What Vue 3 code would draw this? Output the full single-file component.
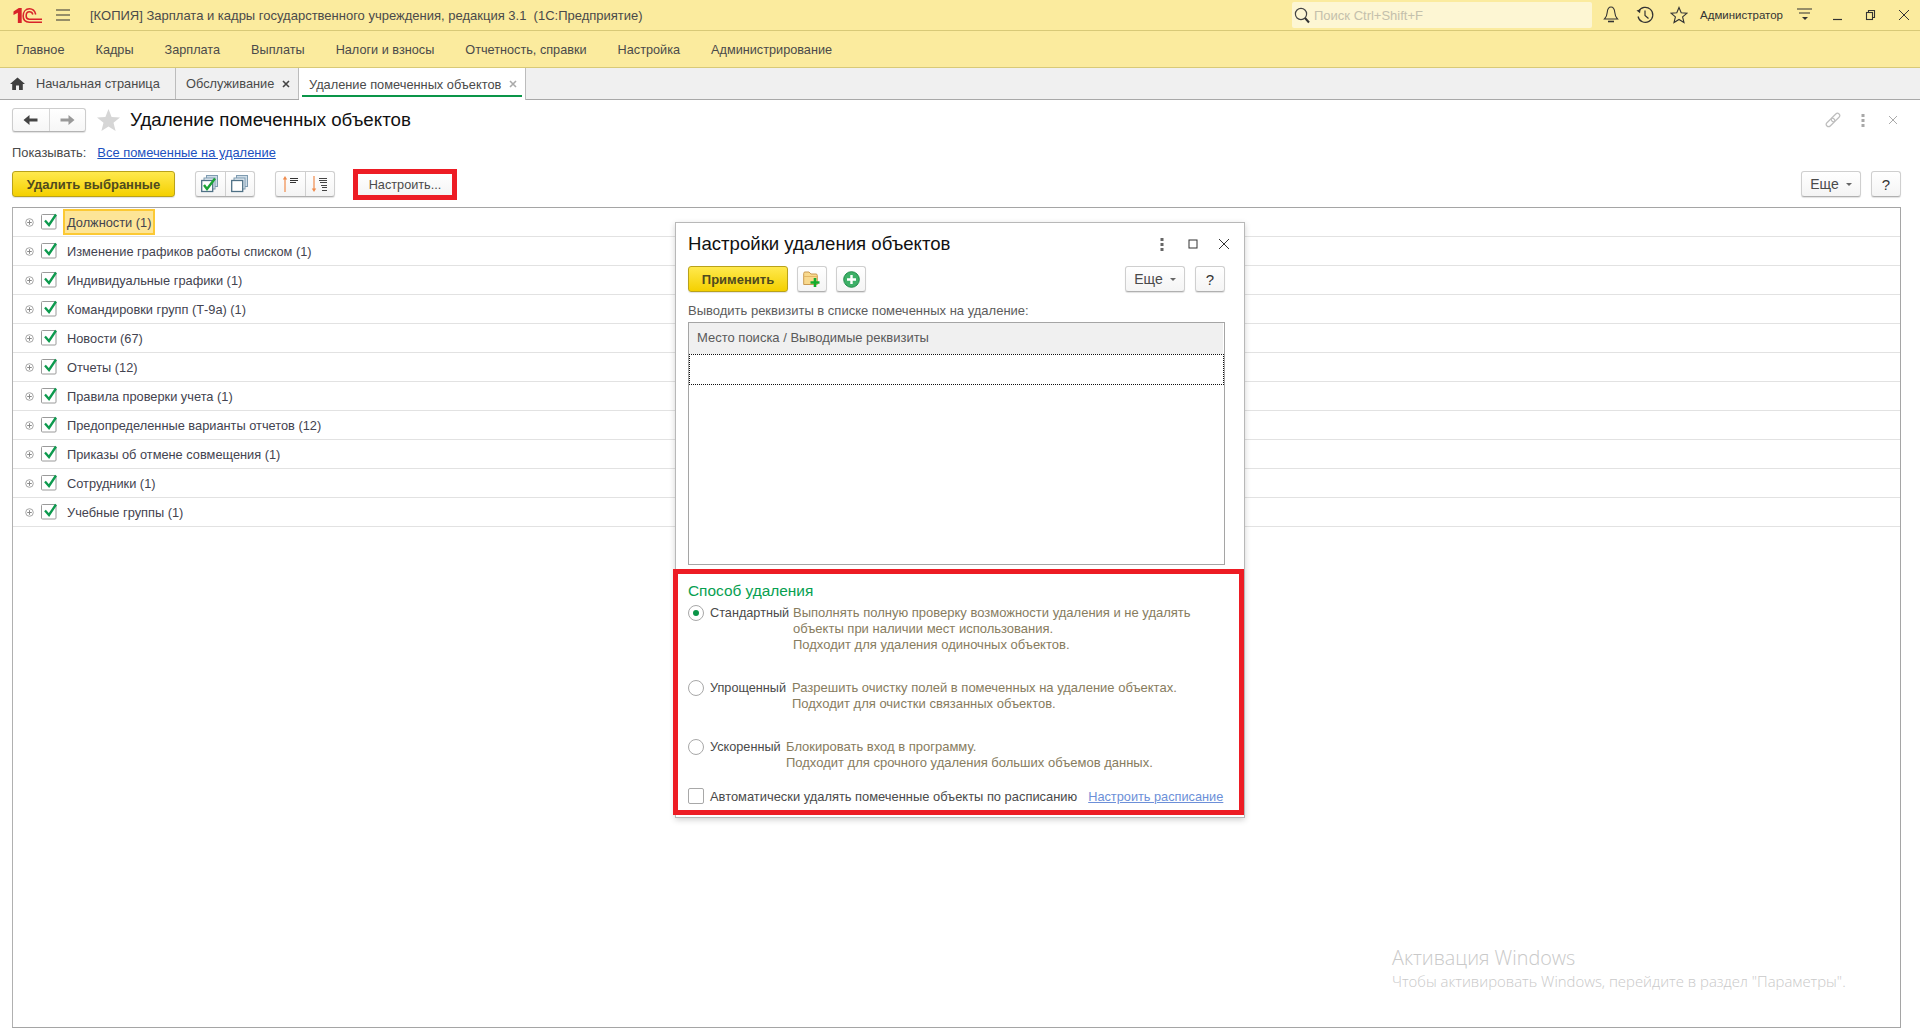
<script setup>
const menuItems = ['Главное', 'Кадры', 'Зарплата', 'Выплаты', 'Налоги и взносы', 'Отчетность, справки', 'Настройка', 'Администрирование']

const rows = [
  'Должности (1)',
  'Изменение графиков работы списком (1)',
  'Индивидуальные графики (1)',
  'Командировки групп (Т-9а) (1)',
  'Новости (67)',
  'Отчеты (12)',
  'Правила проверки учета (1)',
  'Предопределенные варианты отчетов (12)',
  'Приказы об отмене совмещения (1)',
  'Сотрудники (1)',
  'Учебные группы (1)'
]

const methods = [
  {
    name: 'Стандартный',
    nameWidth: 83,
    selected: true,
    lines: ['Выполнять полную проверку возможности удаления и не удалять', 'объекты при наличии мест использования.', 'Подходит для удаления одиночных объектов.']
  },
  {
    name: 'Упрощенный',
    nameWidth: 82,
    selected: false,
    lines: ['Разрешить очистку полей в помеченных на удаление объектах.', 'Подходит для очистки связанных объектов.']
  },
  {
    name: 'Ускоренный',
    nameWidth: 76,
    selected: false,
    lines: ['Блокировать вход в программу.', 'Подходит для срочного удаления больших объемов данных.']
  }
]
</script>

<template>
  <div class="app">
    <header class="topbar">
      <svg class="logo" width="29" height="15" viewBox="0 0 30 15" preserveAspectRatio="none">
        <path d="M0.5 3.5 L6 0 H9 V15 H5 V4.8 L0.5 7z" fill="#d8232a" />
        <path d="M23.5 6.5 C22.5 2.5 20 0.8 17 0.8 C13 0.8 10.5 4 10.5 8 C10.5 12 13 14.2 17 14.2 H30" fill="none" stroke="#d8232a" stroke-width="1.6" />
        <path d="M20.5 6.5 C20 4.5 18.5 3.8 17 3.8 C15 3.8 13.6 5.5 13.6 8 C13.6 10.3 15 11.2 17 11.2 H30" fill="none" stroke="#d8232a" stroke-width="1.6" />
      </svg>
      <svg class="burger" width="14" height="12" viewBox="0 0 14 12">
        <path d="M0 1 H14 M0 6 H14 M0 11 H14" stroke="#333" stroke-width="1.2" />
      </svg>
      <div class="app-title">[КОПИЯ] Зарплата и кадры государственного учреждения, редакция 3.1&nbsp; (1С:Предприятие)</div>
      <div class="search">
        <svg width="16" height="17" viewBox="0 0 16 17">
          <circle cx="7" cy="7" r="5.6" fill="none" stroke="#444" stroke-width="1.2" />
          <path d="M11 11 L15 15.5" stroke="#333" stroke-width="2" />
        </svg>
        <span>Поиск Ctrl+Shift+F</span>
      </div>
      <div class="top-slot">
        <svg width="16" height="18" viewBox="0 0 16 18" fill="none" stroke="#333" stroke-width="1.1">
          <path d="M8 1 C5 1 4.5 3.5 4.2 6.5 C4 9.5 3 11.5 1.5 13 H14.5 C13 11.5 12 9.5 11.8 6.5 C11.5 3.5 11 1 8 1z" />
          <path d="M5 15.5 H11" stroke-width="1.6" />
        </svg>
      </div>
      <div class="top-slot">
        <svg width="18" height="18" viewBox="0 0 18 18" fill="none" stroke="#333" stroke-width="1.2">
          <path d="M2.6 5.5 A7.5 7.5 0 1 1 2 10.5" />
          <path d="M0.5 4.5 L4.5 3.2 L4 7.2z" fill="#333" stroke="none" />
          <path d="M9 4.5 V9.5 L12.5 12.5" />
        </svg>
      </div>
      <div class="top-slot">
        <svg width="18" height="18" viewBox="0 0 18 18">
          <path d="M9 1.5 L11.2 6.8 L17 7.2 L12.6 10.9 L14 16.5 L9 13.5 L4 16.5 L5.4 10.9 L1 7.2 L6.8 6.8z" fill="none" stroke="#333" stroke-width="1.1" />
        </svg>
      </div>
      <div class="user">Администратор</div>
      <div class="win-slot">
        <svg width="16" height="14" viewBox="0 0 16 14">
          <path d="M0 1 H15 M2 5 H13" stroke="#333" stroke-width="1.1" />
          <path d="M5 9 H11 L8 12z" fill="#333" />
        </svg>
      </div>
      <div class="win-slot">
        <svg width="12" height="12" viewBox="0 0 12 12"><path d="M1 10.5 H10" stroke="#333" stroke-width="1.2" /></svg>
      </div>
      <div class="win-slot">
        <svg width="12" height="12" viewBox="0 0 12 12" fill="none" stroke="#333" stroke-width="1.1">
          <rect x="1.5" y="3.5" width="6" height="7" />
          <path d="M3.5 3.5 V1.5 H9.5 V8.5 H7.5" />
        </svg>
      </div>
      <div class="win-slot">
        <svg width="12" height="12" viewBox="0 0 12 12"><path d="M1 1 L11 11 M11 1 L1 11" stroke="#333" stroke-width="1" /></svg>
      </div>
    </header>

    <nav class="menu">
      <span v-for="item in menuItems" :key="item" class="menu-item">{{ item }}</span>
    </nav>

    <div class="tabs">
      <div class="tab tab-home">
        <svg width="15" height="13" viewBox="0 0 15 13">
          <path d="M7.5 0.5 L15 7 H12.8 V13 H9 V8.5 H6 V13 H2.2 V7 H0z" fill="#3f3f3f" />
        </svg>
        <span>Начальная страница</span>
      </div>
      <div class="tab tab-service">
        <span>Обслуживание</span>
        <svg width="8" height="8" viewBox="0 0 8 8"><path d="M1 1 L7 7 M7 1 L1 7" stroke="#444" stroke-width="1.6" /></svg>
      </div>
      <div class="tab tab-active">
        <span>Удаление помеченных объектов</span>
        <svg width="8" height="8" viewBox="0 0 8 8"><path d="M1 1 L7 7 M7 1 L1 7" stroke="#aaa" stroke-width="1.6" /></svg>
      </div>
    </div>

    <main class="page">
      <div class="page-head">
        <div class="nav-btns">
          <button class="nav-btn">
            <svg width="15" height="12" viewBox="0 0 15 12"><path d="M0.5 6 L6.5 1 V4.4 H14.5 V7.6 H6.5 V11z" fill="#444" /></svg>
          </button>
          <button class="nav-btn">
            <svg width="15" height="12" viewBox="0 0 15 12"><path d="M14.5 6 L8.5 1 V4.4 H0.5 V7.6 H8.5 V11z" fill="#999" /></svg>
          </button>
        </div>
        <svg class="fav" width="23" height="22" viewBox="0 0 23 22">
          <path d="M11.5 0 L14.6 7.9 L23 8.4 L16.5 13.7 L18.6 22 L11.5 17.4 L4.4 22 L6.5 13.7 L0 8.4 L8.4 7.9z" fill="#d6d6d6" />
        </svg>
        <h1 class="page-title">Удаление помеченных объектов</h1>
        <div class="head-icons">
          <svg width="16" height="16" viewBox="0 0 16 16" fill="none" stroke="#bdbdbd" stroke-width="1.2">
            <rect x="0.5" y="8.2" width="10" height="4.6" rx="2.3" transform="rotate(-45 5.5 10.5)" />
            <rect x="5.5" y="3.2" width="10" height="4.6" rx="2.3" transform="rotate(-45 10.5 5.5)" />
          </svg>
          <svg width="16" height="16" viewBox="0 0 16 16" fill="#a8a8a8">
            <rect x="6.5" y="2" width="3" height="3" /><rect x="6.5" y="7" width="3" height="3" /><rect x="6.5" y="12" width="3" height="3" />
          </svg>
          <svg width="16" height="16" viewBox="0 0 16 16"><path d="M4 4 L12 12 M12 4 L4 12" stroke="#aaa" stroke-width="1" /></svg>
        </div>
      </div>

      <div class="show-row">
        <span>Показывать:</span>
        <a class="link">Все помеченные на удаление</a>
      </div>

      <div class="toolbar">
        <button class="btn btn-primary btn-delete">Удалить выбранные</button>
        <div class="btn-group">
          <button class="group-cell">
            <svg width="18" height="18" viewBox="0 0 18 18" fill="none">
              <rect x="5.5" y="0.5" width="11" height="11" fill="#cfdde8" stroke="#7f9bb0" />
              <rect x="3" y="3" width="11" height="11" fill="#e4edf4" stroke="#7f9bb0" />
              <rect x="0.7" y="5.5" width="11" height="11" fill="#fff" stroke="#4f7186" stroke-width="1.3" />
              <path d="M3 10 L6 14 L14 3.5" stroke="#1aa336" stroke-width="2.4" />
            </svg>
          </button>
          <button class="group-cell">
            <svg width="18" height="18" viewBox="0 0 18 18" fill="none">
              <rect x="5.5" y="0.5" width="11" height="11" fill="#cfdde8" stroke="#7f9bb0" />
              <rect x="3" y="3" width="11" height="11" fill="#e4edf4" stroke="#7f9bb0" />
              <rect x="0.7" y="5.5" width="11" height="11" fill="#fff" stroke="#4f7186" stroke-width="1.3" />
            </svg>
          </button>
        </div>
        <div class="btn-group">
          <button class="group-cell">
            <svg width="17" height="18" viewBox="0 0 17 18" fill="none">
              <path d="M3 17 V3" stroke="#f08a4b" stroke-width="1.2" />
              <path d="M0.8 4.5 L3 1 L5.2 4.5z" fill="#f08a4b" />
              <path d="M8 3.5 H16 M8 5.5 H16 M8 7.5 H14" stroke="#333" stroke-width="1" />
            </svg>
          </button>
          <button class="group-cell">
            <svg width="18" height="18" viewBox="0 0 18 18" fill="none">
              <path d="M3 1 V15" stroke="#f08a4b" stroke-width="1.2" />
              <path d="M0.8 13.5 L3 17 L5.2 13.5z" fill="#f08a4b" />
              <path d="M8 3.5 H16 M8 5.5 H16 M9 7.5 H16 M10 10.5 H16 M11 12.5 H16 M11 15.5 H16" stroke="#444" stroke-width="1" />
            </svg>
          </button>
        </div>
        <div class="marked-btn">
          <button class="btn btn-setup">Настроить...</button>
        </div>
        <button class="btn btn-more">Еще<i class="caret"></i></button>
        <button class="btn btn-help">?</button>
      </div>

      <section class="list">
        <div v-for="(row, index) in rows" :key="row" class="list-row">
          <svg class="expander" width="9" height="9" viewBox="0 0 9 9" fill="none">
            <circle cx="4.5" cy="4.5" r="3.8" stroke="#a5a5a5" />
            <path d="M2.2 4.5 H6.8 M4.5 2.2 V6.8" stroke="#8a8a8a" />
          </svg>
          <svg class="check" width="18" height="18" viewBox="0 0 18 18" fill="none">
            <rect x="0.5" y="2.5" width="14.5" height="14.5" rx="1" fill="#fff" stroke="#9a9a9a" />
            <path d="M4 8.5 L8 13 L15 2.5" stroke="#0d9a4e" stroke-width="2.3" />
          </svg>
          <span class="row-text" :class="{ current: index === 0 }">{{ row }}</span>
        </div>
      </section>
    </main>

    <aside class="dialog">
      <div class="dialog-head">
        <h2 class="dialog-title">Настройки удаления объектов</h2>
        <div class="dialog-icons">
          <svg width="16" height="16" viewBox="0 0 16 16" fill="#666">
            <rect x="6.5" y="2" width="3" height="3" /><rect x="6.5" y="7" width="3" height="3" /><rect x="6.5" y="12" width="3" height="3" />
          </svg>
          <svg width="16" height="16" viewBox="0 0 16 16"><rect x="4" y="4" width="8" height="8" fill="none" stroke="#333" stroke-width="1" /></svg>
          <svg width="16" height="16" viewBox="0 0 16 16"><path d="M3 3 L13 13 M13 3 L3 13" stroke="#333" stroke-width="1" /></svg>
        </div>
      </div>

      <div class="dialog-toolbar">
        <button class="btn btn-primary btn-apply">Применить</button>
        <button class="btn btn-icon">
          <svg width="18" height="17" viewBox="0 0 18 17" fill="none">
            <path d="M0.7 13.5 V2.5 Q0.7 1 2 1 H6 L8 3 H13 Q14.3 3 14.3 4.5 V13.5z" fill="#f8d98e" stroke="#c99a52" />
            <path d="M0.7 5.5 H14.3" stroke="#e3b766" />
            <path d="M12 7 V16 M7.5 11.5 H16.5" stroke="#12ac2c" stroke-width="2.6" />
          </svg>
        </button>
        <button class="btn btn-icon">
          <svg width="17" height="17" viewBox="0 0 17 17">
            <circle cx="8.5" cy="8.5" r="7.8" fill="#3db067" stroke="#1f8c49" />
            <path d="M8.5 4 V13 M4 8.5 H13" stroke="#fff" stroke-width="2.4" />
          </svg>
        </button>
        <button class="btn btn-more">Еще<i class="caret"></i></button>
        <button class="btn btn-help">?</button>
      </div>

      <div class="fields-label">Выводить реквизиты в списке помеченных на удаление:</div>
      <div class="fields">
        <div class="fields-header">Место поиска / Выводимые реквизиты</div>
        <div class="fields-row"></div>
      </div>

      <section class="method-box">
        <h3 class="method-title">Способ удаления</h3>
        <div v-for="method in methods" :key="method.name" class="method">
          <span class="radio" :class="{ on: method.selected }"></span>
          <span class="method-name" :style="{ width: method.nameWidth + 'px' }">{{ method.name }}</span>
          <div class="method-desc">
            <div v-for="line in method.lines" :key="line">{{ line }}</div>
          </div>
        </div>
        <div class="auto-row">
          <span class="box"></span>
          <span class="auto-text">Автоматически удалять помеченные объекты по расписанию</span>
          <a class="link link-soft">Настроить расписание</a>
        </div>
      </section>
    </aside>

    <div class="watermark">
      <div class="wm-title">Активация Windows</div>
      <div class="wm-text">Чтобы активировать Windows, перейдите в раздел "Параметры".</div>
    </div>
  </div>
</template>

<style>
html,
body {
  margin: 0;
  background: #fff;
}
</style>

<style scoped>
.app {
  position: relative;
  width: 1920px;
  height: 1030px;
  overflow: hidden;
  display: flex;
  flex-direction: column;
  font-family: "Liberation Sans", Arial, sans-serif;
  font-size: 13px;
  color: #4a4a4a;
  background: #fff;
}

button {
  font-family: inherit;
  padding: 0;
  margin: 0;
  cursor: default;
}

/* top bar */
.topbar {
  height: 30px;
  flex: none;
  display: flex;
  align-items: center;
  background: #fbeb9e;
  border-bottom: 1px solid #d8c977;
  padding-left: 13px;
}

.burger {
  margin-left: 14px;
}

.app-title {
  margin-left: 20px;
  flex: 1;
  white-space: nowrap;
}

.search {
  width: 300px;
  height: 26px;
  margin-right: 2px;
  box-sizing: border-box;
  display: flex;
  align-items: center;
  gap: 4px;
  padding-left: 2px;
  background: #fdf6d3;
  border-radius: 2px;
  color: #c4c0ac;
}

.top-slot {
  width: 34px;
  display: flex;
  justify-content: center;
}

.user {
  width: 92px;
  padding-left: 4px;
  box-sizing: border-box;
  font-size: 11.5px;
  color: #333;
  white-space: nowrap;
}

.win-slot {
  width: 33px;
  display: flex;
  justify-content: center;
}

/* menu */
.menu {
  height: 37px;
  box-sizing: border-box;
  padding-top: 2px;
  flex: none;
  display: flex;
  align-items: center;
  padding-left: 16px;
  gap: 31px;
  background: #fbeb9e;
  border-bottom: 1px solid #d8c977;
  font-size: 12.7px;
}

/* tabs */
.tabs {
  height: 31px;
  flex: none;
  display: flex;
  background: #f0f0f0;
  border-bottom: 1px solid #a8a8a8;
  font-size: 12.8px;
}

.tab {
  position: relative;
  display: flex;
  align-items: center;
  box-sizing: border-box;
  height: 31px;
  border-right: 1px solid #bcbcbc;
}

.tab-home {
  width: 176px;
  padding-left: 10px;
  gap: 11px;
}

.tab-service {
  width: 123px;
  padding-left: 10px;
  justify-content: space-between;
  padding-right: 8px;
}

.tab-active {
  width: 227px;
  padding-left: 10px;
  padding-right: 8px;
  justify-content: space-between;
  background: #fff;
  height: 32px;
}

.tab-active::after {
  content: '';
  position: absolute;
  left: 3px;
  right: 3px;
  top: 27px;
  height: 2px;
  background: #0a9548;
}

/* page */
.page {
  flex: 1;
  min-height: 0;
  display: flex;
  flex-direction: column;
  padding: 8px 19px 2px 12px;
}

.page-head {
  height: 24px;
  flex: none;
  display: flex;
  align-items: center;
}

.nav-btns {
  width: 74px;
  height: 24px;
  box-sizing: border-box;
  display: flex;
  background: linear-gradient(#fff, #f6f6f6);
  border: 1px solid #cdcdcd;
  border-bottom-color: #b4b4b4;
  border-radius: 3px;
  box-shadow: 0 1px 1px rgba(0, 0, 0, 0.12);
}

.nav-btn {
  flex: 1;
  border: 0;
  background: none;
  display: flex;
  align-items: center;
  justify-content: center;
}

.nav-btn + .nav-btn {
  border-left: 1px solid #d6d6d6;
}

.fav {
  margin-left: 11px;
}

.page-title {
  margin: 0 0 0 10px;
  font-size: 18.7px;
  font-weight: 400;
  color: #111;
}

.head-icons {
  margin-left: auto;
  display: flex;
  gap: 14px;
}

.show-row {
  margin-top: 13px;
  height: 16px;
  line-height: 16px;
  flex: none;
  display: flex;
  gap: 11px;
  font-size: 12.9px;
}

.link {
  color: #1b50c0;
  text-decoration: underline;
}

.toolbar {
  margin-top: 10px;
  height: 26px;
  flex: none;
  display: flex;
  align-items: center;
}

.btn {
  height: 26px;
  box-sizing: border-box;
  background: linear-gradient(#fff, #f4f4f4);
  border: 1px solid #cfcfcf;
  border-bottom-color: #b0b0b0;
  border-radius: 3px;
  box-shadow: 0 1px 1px rgba(0, 0, 0, 0.12);
  color: #4a4a4a;
  font-size: 13px;
  flex: none;
}

.btn-primary {
  background: linear-gradient(#ffe94e, #f4d000);
  border: 1px solid #b9a21a;
  font-weight: 700;
  color: #4f4a1e;
}

.btn-delete {
  width: 163px;
}

.btn-group {
  margin-left: 20px;
  width: 60px;
  height: 26px;
  box-sizing: border-box;
  display: flex;
  background: linear-gradient(#fff, #f4f4f4);
  border: 1px solid #cfcfcf;
  border-bottom-color: #b0b0b0;
  border-radius: 3px;
  box-shadow: 0 1px 1px rgba(0, 0, 0, 0.12);
}

.group-cell {
  flex: 1;
  border: 0;
  background: none;
  display: flex;
  align-items: center;
  justify-content: center;
}

.group-cell + .group-cell {
  border-left: 1px solid #cfcfcf;
}

.marked-btn {
  margin-left: 18px;
  width: 104px;
  height: 31px;
  margin-top: -2px;
  margin-bottom: -3px;
  flex: none;
  box-sizing: border-box;
  border: 5px solid #ed1c24;
  margin-right: auto;
}

.btn-setup {
  width: 94px;
  height: 21px;
  border: 0;
  box-shadow: none;
  border-radius: 0;
  display: block;
  font-size: 12.7px;
}

.btn-more {
  width: 60px;
  display: flex;
  align-items: center;
  justify-content: center;
  gap: 7px;
  font-size: 14px;
}

.caret {
  width: 0;
  height: 0;
  border: 3px solid transparent;
  border-top: 3px solid #666;
  border-bottom: 0;
}

.btn-help {
  width: 30px;
  margin-left: 10px;
  font-size: 15px;
  color: #333;
}

/* list */
.list {
  margin-top: 10px;
  flex: 1;
  min-height: 0;
  box-sizing: border-box;
  border: 1px solid #a5a5a5;
  border-left-color: #b0b0b0;
}

.list-row {
  height: 28px;
  display: flex;
  align-items: center;
  border-bottom: 1px solid #e2e2e2;
  padding-left: 12px;
  color: #43434f;
  font-size: 12.8px;
}

.check {
  margin-left: 7px;
  margin-top: -3px;
  flex: none;
}

.row-text {
  margin-left: 4px;
  height: 26px;
  line-height: 24px;
  padding: 0 2px;
  box-sizing: border-box;
  border: 2px solid transparent;
  white-space: nowrap;
}

.row-text.current {
  background: #fde597;
  border-color: #fcc934;
}

/* dialog */
.dialog {
  position: absolute;
  left: 675px;
  top: 222px;
  width: 570px;
  height: 596px;
  box-sizing: border-box;
  padding: 9px 19px 0 12px;
  background: #fff;
  border: 1px solid #b8b8b8;
  box-shadow: 0 2px 6px rgba(0, 0, 0, 0.18);
}

.dialog-head {
  height: 24px;
  display: flex;
  align-items: center;
  margin-right: -7px;
}

.dialog-title {
  margin: 0;
  font-size: 18.6px;
  font-weight: 400;
  color: #111;
}

.dialog-icons {
  margin-left: auto;
  display: flex;
  gap: 15px;
}

.dialog-toolbar {
  margin-top: 10px;
  height: 26px;
  display: flex;
  align-items: center;
}

.btn-apply {
  width: 100px;
}

.btn-icon {
  width: 30px;
  margin-left: 9px;
  display: flex;
  align-items: center;
  justify-content: center;
}

.dialog-toolbar .btn-more {
  margin-left: auto;
}

.fields-label {
  margin-top: 11px;
  height: 16px;
  line-height: 16px;
  white-space: nowrap;
  color: #5c5c5c;
}

.fields {
  margin-top: 3px;
  height: 243px;
  box-sizing: border-box;
  border: 1px solid #a5a5a5;
}

.fields-header {
  height: 31px;
  line-height: 30px;
  margin-right: 1px;
  padding-left: 8px;
  background: #f0f0f0;
  color: #5a5a5a;
}

.fields-row {
  height: 31px;
  box-sizing: border-box;
  border: 1px dotted #111;
}

.method-box {
  margin: 4px -19px 0 -15px;
  height: 246px;
  box-sizing: border-box;
  padding: 8px 0 0 10px;
  border: 5px solid #ed1c24;
  background: #fff;
}

.method-title {
  margin: 0 0 5px;
  height: 18px;
  line-height: 18px;
  font-size: 15.4px;
  font-weight: 400;
  color: #06a050;
}

.method {
  display: flex;
  align-items: flex-start;
  margin-bottom: 27px;
  line-height: 16px;
  white-space: nowrap;
}

.radio {
  position: relative;
  width: 16px;
  height: 16px;
  flex: none;
  box-sizing: border-box;
  border: 1px solid #a8a8a8;
  border-radius: 50%;
  margin-right: 6px;
}

.radio.on::after {
  content: '';
  position: absolute;
  left: 4px;
  top: 4px;
  width: 6px;
  height: 6px;
  border-radius: 50%;
  background: #0a9548;
}

.method-name {
  flex: none;
  font-size: 12.7px;
}

.method-desc {
  color: #877c5e;
}

.auto-row {
  margin-top: -10px;
  display: flex;
  align-items: center;
  height: 16px;
  white-space: nowrap;
}

.auto-text {
  font-size: 12.9px;
}

.box {
  width: 16px;
  height: 16px;
  flex: none;
  box-sizing: border-box;
  border: 1px solid #a8a8a8;
  border-radius: 2px;
  margin-right: 6px;
}

.link-soft {
  margin-left: 11px;
  color: #6c8fd8;
  font-size: 12.75px;
}

/* windows watermark */
.watermark {
  position: absolute;
  left: 1392px;
  top: 945px;
  color: #c9c9c9;
  font-family: "Open Sans", sans-serif;
  font-weight: 300;
  white-space: nowrap;
}

.wm-title {
  font-size: 19.8px;
  line-height: 25px;
}

.wm-text {
  margin-top: 1px;
  font-size: 14.9px;
  line-height: 20px;
}
</style>
